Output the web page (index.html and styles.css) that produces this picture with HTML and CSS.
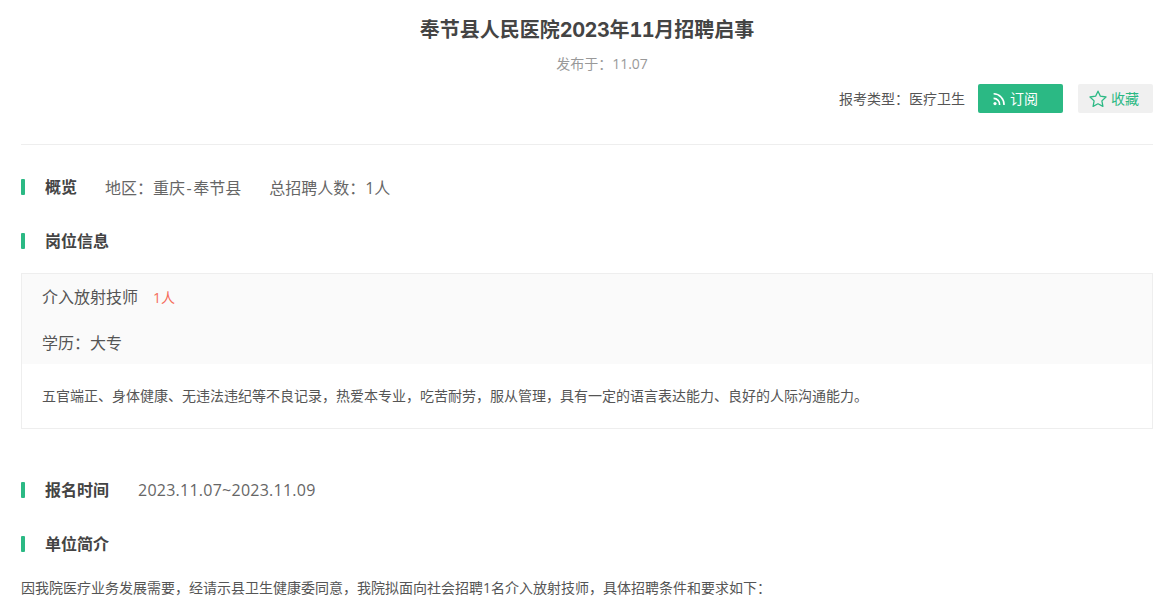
FILE: index.html
```html
<!DOCTYPE html>
<html lang="zh-CN">
<head>
<meta charset="utf-8">
<title>奉节县人民医院2023年11月招聘启事</title>
<link rel="stylesheet" href="styles.css">
</head>
<body>
<main class="page">
  <header class="head">
    <h1 class="title">奉节县人民医院<span class="num">2023</span>年<span class="num">11</span>月招聘启事</h1>
    <p class="date">发布于：11.07</p>
    <div class="actions">
      <span class="type">报考类型：医疗卫生</span>
      <a class="btn btn-sub">
        <svg class="ico-rss" viewBox="0 0 14 14" width="14" height="14"><circle cx="3" cy="11.6" r="1.6" fill="#fff"/><path d="M1.6 6.4a6 6 0 0 1 6 6.6M1.6 1.8a10.6 10.6 0 0 1 10.4 11.2" fill="none" stroke="#fff" stroke-width="1.6"/></svg>
        <span>订阅</span>
      </a>
      <a class="btn btn-fav">
        <svg class="ico-star" viewBox="0 0 18 18" width="18" height="18"><path d="M9 1.2l2.4 5 5.6.8-4.1 3.9 1 5.5L9 13.8l-4.9 2.6 1-5.5L1 7l5.6-.8z" fill="none" stroke="#2bb984" stroke-width="1.3" stroke-linejoin="round"/></svg>
        <span>收藏</span>
      </a>
    </div>
  </header>

  <section class="sec">
    <h2 class="sec-title">概览</h2>
    <span class="meta meta-region">地区：重庆<span class="dash">-</span>奉节县</span>
    <span class="meta meta-total">总招聘人数：1人</span>
  </section>

  <section class="sec">
    <h2 class="sec-title">岗位信息</h2>
  </section>

  <div class="job">
    <div class="job-top">
      <div class="job-row"><span>介入放射技师</span><span class="count">1人</span></div>
      <div class="job-row">学历：大专</div>
    </div>
    <p class="job-desc">五官端正、身体健康、无违法违纪等不良记录，热爱本专业，吃苦耐劳，服从管理，具有一定的语言表达能力、良好的人际沟通能力。</p>
  </div>

  <section class="sec sec-time">
    <h2 class="sec-title">报名时间</h2>
    <span class="meta meta-time">2023.11.07~2023.11.09</span>
  </section>

  <section class="sec">
    <h2 class="sec-title">单位简介</h2>
  </section>

  <p class="intro">因我院医疗业务发展需要，经请示县卫生健康委同意，我院拟面向社会招聘1名介入放射技师，具体招聘条件和要求如下：</p>
</main>
</body>
</html>
```
FILE: styles.css
```css
* { box-sizing: border-box; }
html, body { margin: 0; padding: 0; background: #fff; overflow: hidden; }
body {
  font-family: "Open Sans", "Noto Sans CJK SC", sans-serif;
  color: #555;
  height: 601px;
}
.page { width: 1132px; margin-left: 21px; }
.head { border-bottom: 1px solid #eee; height: 145px; }
.title {
  margin: 0; padding-top: 15px;
  font-family: Inter, "Noto Sans CJK SC", sans-serif;
  font-variant-numeric: tabular-nums;
  font-size: 20px; line-height: 30px; font-weight: 700;
  color: #444; text-align: center;
}
.num { letter-spacing: -0.5px; }
.date {
  margin: 9px 0 0; padding-left: 30px; font-size: 14px; line-height: 20px;
  color: #999; text-align: center;
}
.actions { display: flex; justify-content: flex-end; align-items: center; margin-top: 10px; }
.type { font-size: 14px; color: #555; margin-right: 13px; padding-bottom: 2px; }
.btn {
  display: flex; align-items: center; height: 29px; border-radius: 2px; font-size: 14px;
}
.btn span { padding-bottom: 2px; }
.btn-sub { width: 85px; background: #2bb984; color: #fff; padding-left: 14px; gap: 4px; }
.btn-fav { width: 75px; background: #f0f0f0; color: #2bb984; padding-left: 11px; gap: 4px; margin-left: 15px; }
.sec { display: flex; align-items: center; height: 24px; margin-top: 30px; }
.sec-title {
  margin: 0; font-size: 16px; font-weight: 700; color: #444; line-height: 24px;
  display: flex; align-items: center; gap: 20px;
}
.sec-title::before {
  content: ""; width: 4px; height: 16px; background: #2bb984; border-radius: 1px;
}
.meta { font-size: 16px; color: #666; margin-left: 29px; }
.meta-region { margin-left: 28px; }
.meta-total { margin-left: 28px; }
.dash { margin: 0 1.5px; }
.job { border: 1px solid #eee; margin-top: 20px; height: 156px; }
.job-top { background: #fafafa; height: 90px; padding: 1px 20px 0; }
.job-row { font-size: 16px; line-height: 45px; color: #555; display: flex; gap: 15px; height: 45px; }
.job-row + .job-row { line-height: 47px; }
.count { color: #f56c5a; font-size: 14px; }
.job-desc { margin: 0; padding: 21px 20px 0; font-size: 14px; line-height: 22px; color: #555; }
.sec-time { margin-top: 49px; }
.meta-time { letter-spacing: 0.25px; }
.intro { margin: 20px 0 0; font-size: 14px; line-height: 24px; color: #555; }
```
